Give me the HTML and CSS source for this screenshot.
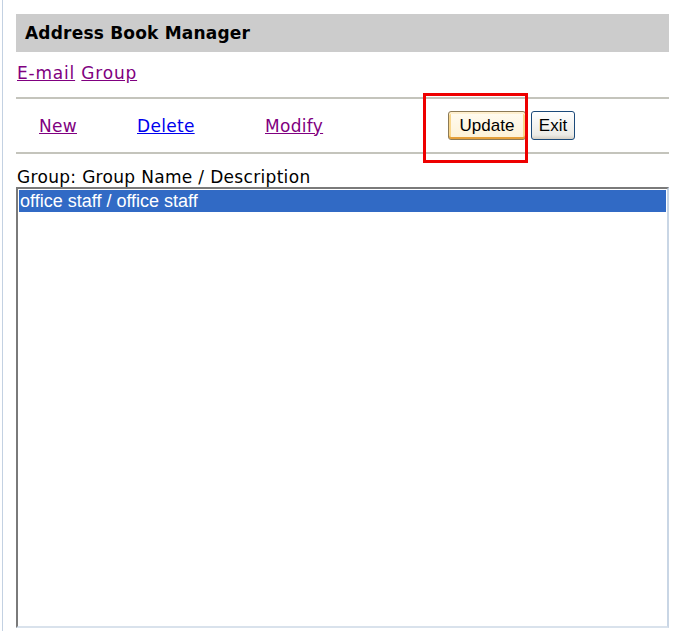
FILE: index.html
```html
<!DOCTYPE html>
<html lang="en">
<head>
    <meta charset="UTF-8">
    <title>Address Book Manager</title>
    <link rel="stylesheet" href="styles.css">
</head>
<body>
    <div class="page">
        <div class="title">Address Book Manager</div>

        <div class="tabs">
            <a href="#" class="visited">E-mail</a> <a href="#" class="visited">Group</a>
        </div>

        <div class="toolbar">
            <a href="#" class="tool visited">New</a>
            <a href="#" class="tool">Delete</a>
            <a href="#" class="tool visited">Modify</a>
            <div class="buttons">
                <button class="btn btn-hot">Update</button>
                <button class="btn btn-exit">Exit</button>
            </div>
            <div class="highlight"></div>
        </div>

        <div class="list-label">Group: Group Name / Description</div>
        <div class="listbox">
            <div class="option selected">office staff / office staff</div>
        </div>
    </div>
</body>
</html>
```

FILE: styles.css
```css
body {
    margin: 0;
    background: #ffffff;
    font-family: 'DejaVu Sans', Verdana, sans-serif;
    font-size: 17px;
    color: #000000;
}

.page {
    margin-left: 2px;
    border-left: 1px solid #c3d1e2;
    height: 631px;
    box-sizing: border-box;
    padding: 14px 4px 0 13px;
}

.title {
    background: #cccccc;
    height: 38px;
    line-height: 38px;
    padding-left: 9px;
    font-weight: bold;
    font-size: 17px;
    letter-spacing: 0.2px;
}

.tabs {
    padding: 11px 1px 0;
    height: 47px;
    box-sizing: border-box;
    border-bottom: 2px solid #c4c4bc;
    font-size: 17px;
    letter-spacing: 0.8px;
}

a {
    color: #0000ee;
}

a.visited {
    color: #800080;
}

.toolbar {
    position: relative;
    display: grid;
    grid-template-columns: 98px 128px 183px auto;
    align-items: center;
    height: 55px;
    box-sizing: border-box;
    border-bottom: 2px solid #c4c4bc;
    padding-left: 23px;
}

.tool {
    justify-self: start;
    font-size: 17px;
    letter-spacing: 0.3px;
}

.buttons {
    display: flex;
    gap: 5px;
}

.btn {
    font-family: 'Liberation Sans', Arial, sans-serif;
    font-size: 17px;
    height: 29px;
    padding: 0 5px;
    border: 1px solid #1c4a7a;
    border-radius: 3px;
    background: linear-gradient(#ffffff, #ecebe6 85%, #d6d0c5);
    color: #000000;
}

.btn-hot {
    width: 78px;
    border-color: #8c7a55;
    box-shadow: inset 0 -2px 0 #e5a03a, inset 0 2px 0 #fff0cf, inset 2px 0 0 #f8d68b, inset -2px 0 0 #f8d68b;
    background: linear-gradient(#fffbf0, #fdf2d6);
}

.btn-exit {
    width: 44px;
}

.highlight {
    position: absolute;
    left: 407px;
    top: -6px;
    width: 99px;
    height: 64px;
    border: 3px solid #ee0000;
}

.list-label {
    font-size: 17px;
    letter-spacing: 0.32px;
    padding: 13px 0 0 1px;
    height: 33px;
    box-sizing: border-box;
}

.listbox {
    height: 441px;
    box-sizing: border-box;
    border: 2px solid;
    border-color: #7a7a7a #c9d6e5 #d9e2ec #7a7a7a;
    padding: 1px;
}

.option {
    font-family: 'Liberation Sans', Arial, sans-serif;
    font-size: 18px;
    height: 22px;
    line-height: 22px;
    padding-left: 1px;
}

.option.selected {
    background: #316ac5;
    color: #ffffff;
}
```
